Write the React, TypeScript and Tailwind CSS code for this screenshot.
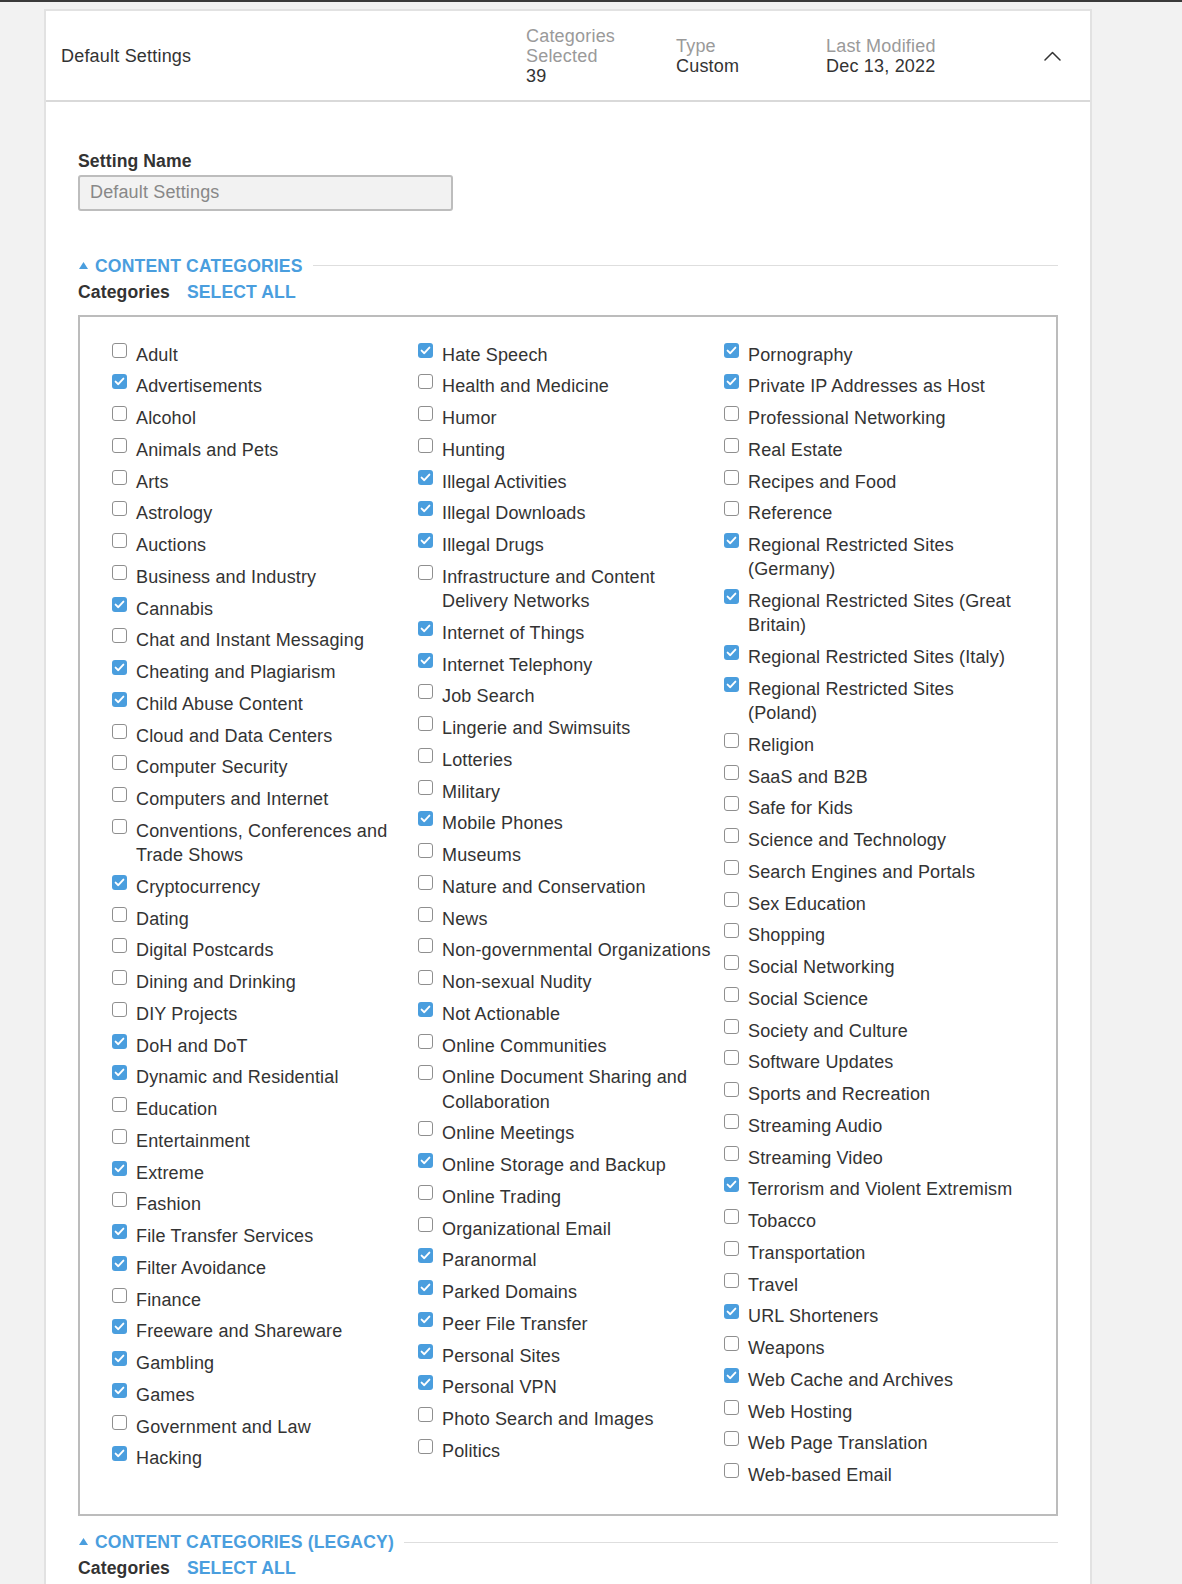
import React from "react";

type Item = [string, boolean];

const col1: Item[] = [
  ["Adult", false],
  ["Advertisements", true],
  ["Alcohol", false],
  ["Animals and Pets", false],
  ["Arts", false],
  ["Astrology", false],
  ["Auctions", false],
  ["Business and Industry", false],
  ["Cannabis", true],
  ["Chat and Instant Messaging", false],
  ["Cheating and Plagiarism", true],
  ["Child Abuse Content", true],
  ["Cloud and Data Centers", false],
  ["Computer Security", false],
  ["Computers and Internet", false],
  ["Conventions, Conferences and Trade Shows", false],
  ["Cryptocurrency", true],
  ["Dating", false],
  ["Digital Postcards", false],
  ["Dining and Drinking", false],
  ["DIY Projects", false],
  ["DoH and DoT", true],
  ["Dynamic and Residential", true],
  ["Education", false],
  ["Entertainment", false],
  ["Extreme", true],
  ["Fashion", false],
  ["File Transfer Services", true],
  ["Filter Avoidance", true],
  ["Finance", false],
  ["Freeware and Shareware", true],
  ["Gambling", true],
  ["Games", true],
  ["Government and Law", false],
  ["Hacking", true],
];

const col2: Item[] = [
  ["Hate Speech", true],
  ["Health and Medicine", false],
  ["Humor", false],
  ["Hunting", false],
  ["Illegal Activities", true],
  ["Illegal Downloads", true],
  ["Illegal Drugs", true],
  ["Infrastructure and Content Delivery Networks", false],
  ["Internet of Things", true],
  ["Internet Telephony", true],
  ["Job Search", false],
  ["Lingerie and Swimsuits", false],
  ["Lotteries", false],
  ["Military", false],
  ["Mobile Phones", true],
  ["Museums", false],
  ["Nature and Conservation", false],
  ["News", false],
  ["Non-governmental Organizations", false],
  ["Non-sexual Nudity", false],
  ["Not Actionable", true],
  ["Online Communities", false],
  ["Online Document Sharing and Collaboration", false],
  ["Online Meetings", false],
  ["Online Storage and Backup", true],
  ["Online Trading", false],
  ["Organizational Email", false],
  ["Paranormal", true],
  ["Parked Domains", true],
  ["Peer File Transfer", true],
  ["Personal Sites", true],
  ["Personal VPN", true],
  ["Photo Search and Images", false],
  ["Politics", false],
];

const col3: Item[] = [
  ["Pornography", true],
  ["Private IP Addresses as Host", true],
  ["Professional Networking", false],
  ["Real Estate", false],
  ["Recipes and Food", false],
  ["Reference", false],
  ["Regional Restricted Sites (Germany)", true],
  ["Regional Restricted Sites (Great Britain)", true],
  ["Regional Restricted Sites (Italy)", true],
  ["Regional Restricted Sites (Poland)", true],
  ["Religion", false],
  ["SaaS and B2B", false],
  ["Safe for Kids", false],
  ["Science and Technology", false],
  ["Search Engines and Portals", false],
  ["Sex Education", false],
  ["Shopping", false],
  ["Social Networking", false],
  ["Social Science", false],
  ["Society and Culture", false],
  ["Software Updates", false],
  ["Sports and Recreation", false],
  ["Streaming Audio", false],
  ["Streaming Video", false],
  ["Terrorism and Violent Extremism", true],
  ["Tobacco", false],
  ["Transportation", false],
  ["Travel", false],
  ["URL Shorteners", true],
  ["Weapons", false],
  ["Web Cache and Archives", true],
  ["Web Hosting", false],
  ["Web Page Translation", false],
  ["Web-based Email", false],
];

function Checkbox({ checked }: { checked: boolean }) {
  if (checked) {
    return (
      <div className="w-[15px] h-[15px] shrink-0 rounded-[3px] bg-[#4a9ede] flex items-center justify-center">
        <svg width="15" height="15" viewBox="0 0 15 15">
          <polyline
            points="3.6,7.6 6.3,10.2 11.4,4.6"
            fill="none"
            stroke="#ffffff"
            strokeWidth="1.9"
            strokeLinecap="round"
            strokeLinejoin="round"
          />
        </svg>
      </div>
    );
  }
  return <div className="w-[15px] h-[15px] shrink-0 rounded-[3px] border-[1.75px] border-[#8f8f8f] bg-white" />;
}

function Column({ items }: { items: Item[] }) {
  return (
    <div className="flex flex-col gap-[7.5px]">
      {items.map(([label, checked]) => (
        <div key={label} className="flex items-start">
          <Checkbox checked={checked} />
          <span className="ml-[9px] w-[271px] text-[18px] leading-[24.25px] tracking-[0.15px] text-[#333]">
            {label}
          </span>
        </div>
      ))}
    </div>
  );
}

function SectionHeader({ title, first }: { title: string; first?: boolean }) {
  return (
    <>
      <div className={`flex items-center ${first ? "mt-[43px]" : "mt-[14px]"}`}>
        <svg width="9" height="7" viewBox="0 0 9 7" className="shrink-0 ml-[1px] mt-[-1px]">
          <polygon points="4.5,0 9,7 0,7" fill="#4a9ede" />
        </svg>
        <span className="ml-[7px] text-[17.6px] font-bold leading-[24px] tracking-[0.15px] text-[#4a9ede]">
          {title}
        </span>
        <div className="ml-[10px] flex-1 h-px bg-[#dedede]" />
      </div>
      <div className="mt-[2px] flex text-[17.6px] font-bold leading-[24px] tracking-[0.1px]">
        <span className="text-[#333]">Categories</span>
        <span className="ml-[17px] text-[#4a9ede]">SELECT ALL</span>
      </div>
    </>
  );
}

export default function App() {
  return (
    <div className="w-full h-[1584px] overflow-hidden bg-[#f2f2f2] font-['Liberation_Sans',Arial,sans-serif]">
      <div className="h-[2px] bg-[#3a3a3a]" />
      <div className="mt-[7px] ml-[44px] w-[1048px] min-h-[1700px] bg-white border-2 border-[#e2e2e2]">
        {/* header */}
        <div className="flex items-center h-[91px] pl-[15px] border-b-2 border-[#d9d9d9]">
          <div className="flex-1 text-[18px] text-[#333] leading-[24px] tracking-[0.2px]">Default Settings</div>
          <div className="w-[150px] text-[18px] leading-[20px] tracking-[0.2px]">
            <div className="w-[110px] text-[#9a9a9a]">Categories Selected</div>
            <div className="text-[#333]">39</div>
          </div>
          <div className="w-[150px] text-[18px] leading-[20px] tracking-[0.2px]">
            <div className="text-[#9a9a9a]">Type</div>
            <div className="text-[#333]">Custom</div>
          </div>
          <div className="w-[150px] text-[18px] leading-[20px] tracking-[0.2px]">
            <div className="text-[#9a9a9a]">Last Modified</div>
            <div className="text-[#333]">Dec 13, 2022</div>
          </div>
          <div className="w-[114px] pl-[68px] flex items-center">
            <svg width="17" height="10" viewBox="0 0 17 10">
              <polyline
                points="1,9 8.5,1.5 16,9"
                fill="none"
                stroke="#333"
                strokeWidth="1.5"
                strokeLinecap="round"
                strokeLinejoin="round"
              />
            </svg>
          </div>
        </div>

        {/* body */}
        <div className="px-[32px] pt-[47px]">
          <div className="text-[17.6px] font-bold leading-[24px] tracking-[0.1px] text-[#333]">Setting Name</div>
          <div className="mt-[1.5px] w-[375px] h-[36px] border-2 border-[#bdbdbd] rounded-[3px] bg-[#f2f2f2] pl-[10px] flex items-center text-[18px] tracking-[0.15px] text-[#888]">
            Default Settings
          </div>

          <SectionHeader title="CONTENT CATEGORIES" first />

          <div className="mt-[11px] border-2 border-[#bcbcbc] pt-[26px] pb-[27px] pl-[32px] grid grid-cols-[306px_306px_306px]">
            <Column items={col1} />
            <Column items={col2} />
            <Column items={col3} />
          </div>

          <SectionHeader title="CONTENT CATEGORIES (LEGACY)" />
          <div className="mt-[11px] h-[200px] border-2 border-[#bcbcbc]" />
        </div>
      </div>
    </div>
  );
}
